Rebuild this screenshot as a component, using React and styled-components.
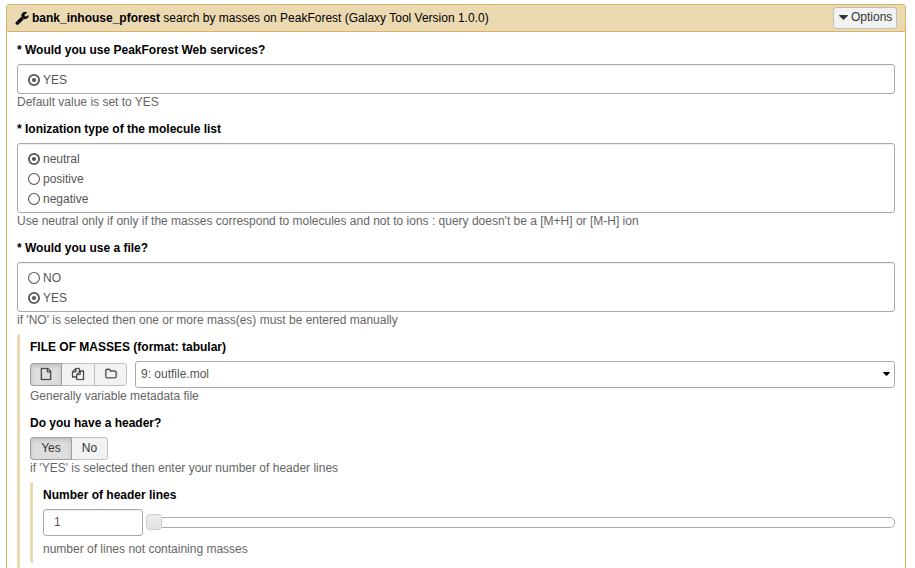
import React from "react";
import styled, { createGlobalStyle, css } from "styled-components";

const GlobalStyle = createGlobalStyle`
  *, *::before, *::after { box-sizing: border-box; }
  body {
    margin: 0;
    background: #fff;
    color: #000;
    font: 12px/16px "Liberation Sans", Arial, sans-serif;
    overflow: hidden;
  }
`;

const Page = styled.main`
  padding: 4px 9px 0 6px;
  height: 568px;
  overflow: hidden;
`;

const Panel = styled.section`
  border: 1px solid #d8b365;
  border-radius: 3px;
  height: 640px;
`;

const PanelHeader = styled.header`
  display: flex;
  align-items: center;
  height: 27px;
  padding: 0 8px;
  background: #ebd9b2;
  border-bottom: 1px solid #d8b365;
  border-radius: 2px 2px 0 0;
`;

const PanelTitle = styled.h1`
  flex: 1;
  margin: 0 0 0 3px;
  font-size: 12px;
  font-weight: normal;
`;

const OptionsButton = styled.button`
  display: flex;
  align-items: center;
  gap: 3px;
  width: 64px;
  height: 22px;
  padding: 0 0 2px 5px;
  font: inherit;
  color: #333;
  background: #f2f2f2;
  border: 1px solid #bfbfbf;
  border-radius: 3px;
`;

const Form = styled.div`
  padding: 10px 10px 0;
`;

const Field = styled.div`
  margin-bottom: 11px;
`;

const FieldTitle = styled.div`
  font-weight: bold;
  margin-bottom: 6px;
`;

const Help = styled.div`
  color: #666;
  margin-top: ${(p) => p.$gap || 0}px;
`;

const RadioBox = styled.div`
  padding: 5px 10px 3px;
  border: 1px solid #aaa;
  border-radius: 3px;
  box-shadow: inset 0 1px 1px rgba(0, 0, 0, 0.075);
`;

const RadioRow = styled.label`
  display: flex;
  align-items: center;
  gap: 3px;
  height: 20px;
  color: #555;
`;

const Nested = styled.div`
  margin-top: 6px;
  padding: 5px 0 6px 10px;
  border-left: 3px solid #ebd9b2;
  border-radius: 3px 0 0 3px;
`;

const Controls = styled.div`
  display: flex;
  align-items: center;
  gap: ${(p) => p.$gap || 0}px;
`;

const ButtonGroup = styled.div`
  display: flex;
  height: 23px;
`;

const ToggleButton = styled.button`
  display: flex;
  align-items: center;
  justify-content: center;
  width: ${(p) => p.$width}px;
  padding: 0 0 1px;
  font: inherit;
  color: #333;
  background: #f2f2f2;
  border: 1px solid #bfbfbf;

  & + & { margin-left: -1px; }
  &:first-child { border-radius: 3px 0 0 3px; }
  &:last-child { border-radius: 0 3px 3px 0; }

  ${(p) => p.$active && css`
    position: relative;
    background: #dedede;
    border-color: #a0a0a0;
    box-shadow: inset 0 2px 4px rgba(0, 0, 0, 0.15);
  `}
`;

const SelectBox = styled.div`
  display: flex;
  flex: 1;
  align-items: center;
  justify-content: space-between;
  height: 27px;
  padding: 0 4px 1px 5px;
  color: #000;
  border: 1px solid #aaa;
  border-radius: 3px;
`;

const SelectValue = styled.span`
  color: #555;
`;

const NumberInput = styled.input`
  width: 100px;
  height: 27px;
  padding: 0 10px 1px;
  font: inherit;
  color: #555;
  border: 1px solid #aaa;
  border-radius: 3px;
  box-shadow: inset 0 1px 1px rgba(0, 0, 0, 0.075);
`;

const Slider = styled.div`
  display: flex;
  flex: 1;
  align-items: center;
`;

const Handle = styled.div`
  width: 16px;
  height: 16px;
  margin-bottom: 1px;
  background: linear-gradient(#ededed, #e2e2e2);
  border: 1px solid #ccc;
  border-radius: 4px;
`;

const Track = styled.div`
  flex: 1;
  height: 11px;
  border: 1px solid #aaa;
  border-left: 0;
  border-radius: 0 5px 5px 0;
`;

const Glyph = styled.svg`
  display: block;
  flex: none;
  fill: currentColor;
`;

const PATHS = {
  wrench:
    "M448 1472q0-26-19-45t-45-19-45 19-19 45 19 45 45 19 45-19 19-45zm644-420l-682 682q-37 37-90 37-52 0-91-37l-106-108q-38-36-38-90 0-53 38-91l681-681q39 98 114.500 173.500t173.500 114.500zm634-435q0 39-23 106-47 134-164.500 217.500t-258.500 83.500q-185 0-316.500-131.500t-131.500-316.500 131.500-316.500 316.500-131.500q58 0 121.500 16.500t107.500 46.500q16 11 16 28t-16 28l-293 169v224l193 107q5-3 79-48.500t135.500-81 70.500-35.500q15 0 23.500 10t8.500 25z",
  file:
    "M1596 380q28 28 48 76t20 88v1152q0 40-28 68t-68 28h-1344q-40 0-68-28t-28-68v-1600q0-40 28-68t68-28h896q40 0 88 20t76 48zm-444-244v376h376q-10-29-22-41l-313-313q-12-12-41-22zm384 1528v-1024h-416q-40 0-68-28t-28-68v-416h-768v1536h1280z",
  files:
    "M1696 384q40 0 68 28t28 68v1216q0 40-28 68t-68 28h-960q-40 0-68-28t-28-68v-288h-544q-40 0-68-28t-28-68v-672q0-40 20-88t48-76l408-408q28-28 76-48t88-20h416q40 0 68 28t28 68v328q68-40 128-40h416zm-544 213l-299 299h299v-299zm-640-384l-299 299h299v-299zm196 647l316-316v-416h-384v416q0 40-28 68t-68 28h-416v640h512v-256q0-40 20-88t48-76zm956 804v-1152h-384v416q0 40-28 68t-68 28h-416v640h896z",
  folder:
    "M1600 1312v-704q0-40-28-68t-68-28h-704q-40 0-68-28t-28-68v-64q0-40-28-68t-68-28h-320q-40 0-68 28t-28 68v960q0 40 28 68t68 28h1216q40 0 68-28t28-68zm128-704v704q0 92-66 158t-158 66h-1216q-92 0-158-66t-66-158v-960q0-92 66-158t158-66h320q92 0 158 66t66 158v32h672q92 0 158 66t66 158z",
};

const Icon = ({ name, size = 12, weight = 0 }) => (
  <Glyph width={size} height={size} viewBox="0 0 1792 1792" overflow="visible">
    <path d={PATHS[name]} stroke="currentColor" strokeWidth={weight} />
  </Glyph>
);

const Caret = ({ width, height }) => (
  <Glyph width={width} height={height} viewBox="0 0 8 5" preserveAspectRatio="none">
    <path d="M0.6 0H7.4Q8.3 0.2 7.7 0.9L4.5 4.6Q4 5 3.5 4.6L0.3 0.9Q-0.3 0.2 0.6 0Z" />
  </Glyph>
);

const RadioMark = ({ checked }) => (
  <Glyph width="12" height="12" viewBox="0 0 12 12">
    <circle
      cx="6"
      cy="6"
      r={checked ? 5.1 : 5.45}
      fill="none"
      stroke="currentColor"
      strokeWidth={checked ? 1.8 : 1.1}
    />
    {checked && <circle cx="6" cy="6" r="2.1" />}
  </Glyph>
);

const RadioField = ({ title, options, value, help }) => (
  <Field>
    <FieldTitle>{title}</FieldTitle>
    <RadioBox>
      {options.map((option) => (
        <RadioRow key={option}>
          <RadioMark checked={option === value} />
          {option}
        </RadioRow>
      ))}
    </RadioBox>
    <Help>{help}</Help>
  </Field>
);

export default function App() {
  return (
    <Page>
      <GlobalStyle />
      <Panel>
        <PanelHeader>
          <Icon name="wrench" size={14} weight={40} />
          <PanelTitle>
            <b>bank_inhouse_pforest</b> search by masses on PeakForest (Galaxy Tool Version 1.0.0)
          </PanelTitle>
          <OptionsButton>
            <Caret width={9} height={5} />
            Options
          </OptionsButton>
        </PanelHeader>
        <Form>
          <RadioField
            title="* Would you use PeakForest Web services?"
            options={["YES"]}
            value="YES"
            help="Default value is set to YES"
          />
          <RadioField
            title="* Ionization type of the molecule list"
            options={["neutral", "positive", "negative"]}
            value="neutral"
            help="Use neutral only if only if the masses correspond to molecules and not to ions : query doesn't be a [M+H] or [M-H] ion"
          />
          <FieldTitle>* Would you use a file?</FieldTitle>
          <RadioBox>
            <RadioRow><RadioMark />NO</RadioRow>
            <RadioRow><RadioMark checked />YES</RadioRow>
          </RadioBox>
          <Help>if 'NO' is selected then one or more mass(es) must be entered manually</Help>
          <Nested>
            <Field>
              <FieldTitle>FILE OF MASSES (format: tabular)</FieldTitle>
              <Controls $gap={8}>
                <ButtonGroup>
                  <ToggleButton $width={32} $active><Icon name="file" weight={40} /></ToggleButton>
                  <ToggleButton $width={34}><Icon name="files" weight={40} /></ToggleButton>
                  <ToggleButton $width={33}><Icon name="folder" weight={40} /></ToggleButton>
                </ButtonGroup>
                <SelectBox>
                  <SelectValue>9: outfile.mol</SelectValue>
                  <Caret width={7} height={4} />
                </SelectBox>
              </Controls>
              <Help>Generally variable metadata file</Help>
            </Field>
            <FieldTitle>Do you have a header?</FieldTitle>
            <Controls>
              <ButtonGroup>
                <ToggleButton $width={42} $active>Yes</ToggleButton>
                <ToggleButton $width={37}>No</ToggleButton>
              </ButtonGroup>
            </Controls>
            <Help>if 'YES' is selected then enter your number of header lines</Help>
            <Nested>
              <FieldTitle>Number of header lines</FieldTitle>
              <Controls $gap={3}>
                <NumberInput defaultValue="1" />
                <Slider>
                  <Handle />
                  <Track />
                </Slider>
              </Controls>
              <Help $gap={5}>number of lines not containing masses</Help>
            </Nested>
          </Nested>
        </Form>
      </Panel>
    </Page>
  );
}
